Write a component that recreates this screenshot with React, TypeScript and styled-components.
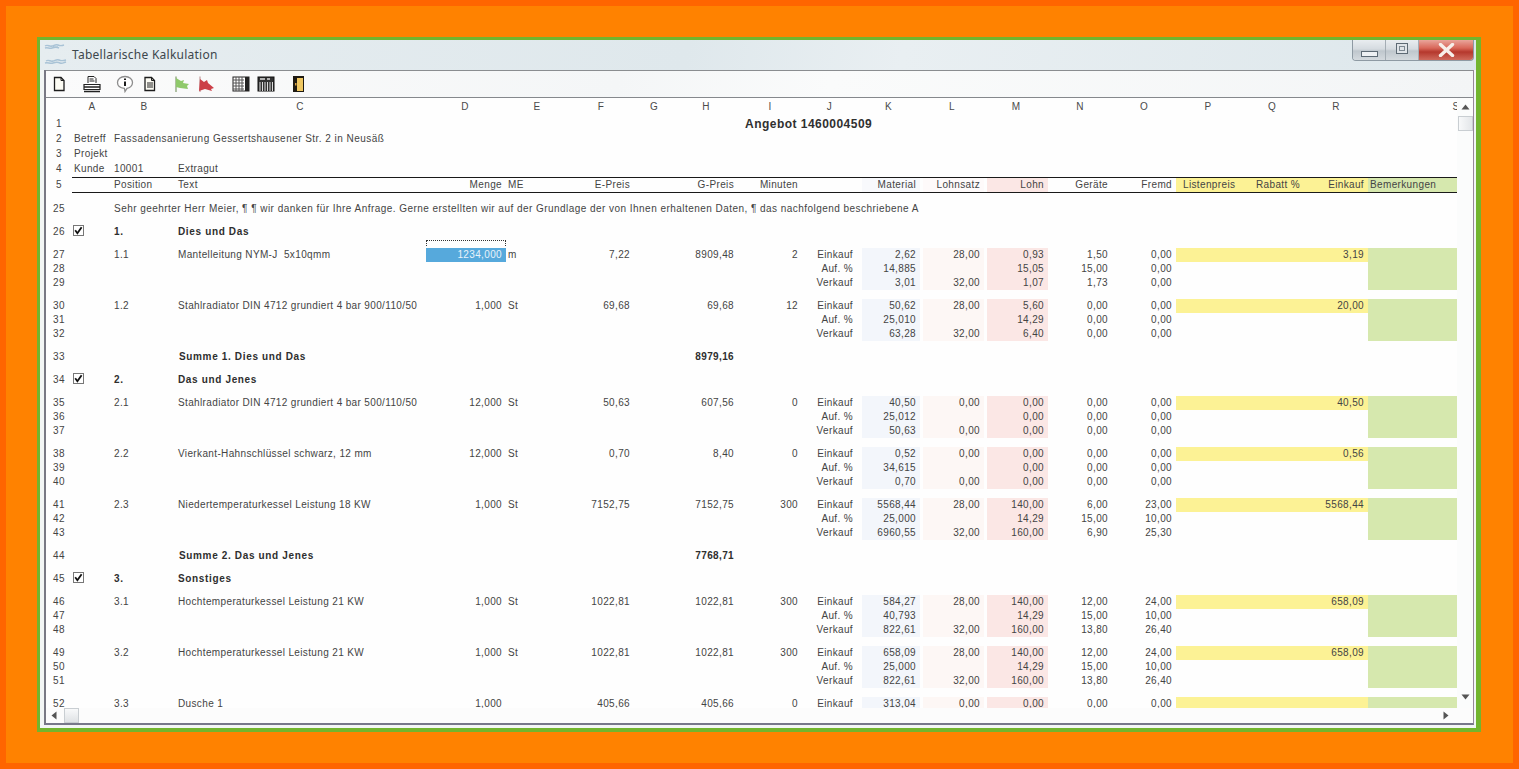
import React from "react";
import styled, { createGlobalStyle } from "styled-components";

const Global = createGlobalStyle`
  html, body { margin: 0; padding: 0; width: 1519px; height: 769px; overflow: hidden; }
  #root { width: 1519px; height: 769px; }
`;

const TEMPLATE = "26px 40px 64px 248px 82px 62px 66px 40px 64px 64px 55px 63px 64px 64px 64px 64px 64px 64px 64px 176px";

const C = { num: 1, A: 2, B: 3, TXT: 4, D: 5, E: 6, F: 7, G: 8, H: 9, I: 10, J: 11, K: 12, L: 13, M: 14, N: 15, O: 16, P: 17, Q: 18, R: 19, S: 20 };
const TINT = { blue: "#f3f6fb", faint: "#fdf7f5", pink: "#fbe7e5", yellow: "#fcf295", green: "#d6e8ae" };

const Page = styled.div`
  box-sizing: border-box; width: 1519px; height: 769px; padding: 6px; background: #ff6500; display: flex;
`;
const Frame = styled.div`
  flex: 1; min-width: 0; display: flex; background: #ff8200; padding: 31px 32px 31px 31px;
`;
const Window = styled.div`
  flex: 1; display: flex; flex-direction: column; min-width: 0;
  border-style: solid; border-color: #72b52e; border-width: 3px 5px 4px 3px;
  background: #eef3f4;
  font-family: "Liberation Sans", Arial, sans-serif;
`;
const TitleBar = styled.div`
  height: 30px; flex: none; display: flex; align-items: flex-start; padding-left: 4px;
  background: linear-gradient(100deg, #e6edf0 0%, #dfe8ec 45%, #e9eff2 60%, #dde7eb 100%);
`;
const Logo = styled.svg`
  width: 24px; height: 24px; flex: none; margin-top: 2px;
`;
const TitleText = styled.div`
  font-family: "Noto Sans", "Open Sans", sans-serif; font-size: 12px; line-height: 30px; color: #3d474c;
  margin-left: 4px; letter-spacing: .25px;
`;
const Controls = styled.div`
  margin-left: auto; margin-right: 2px; display: flex; height: 20px;
  border: 1px solid #8e9aa3; border-top: 0; border-radius: 0 0 4px 4px; overflow: hidden;
`;
const CtrlButton = styled.div<{ $w: number; $close?: boolean }>`
  width: ${p => p.$w}px; display: flex; align-items: center; justify-content: center;
  border-left: 1px solid #a4adb4;
  background: ${p => p.$close
    ? "linear-gradient(#e9a59b 0%, #d9685a 40%, #b5382d 60%, #cf6a5c 100%)"
    : "linear-gradient(#e9edf0 0%, #d5dbe0 45%, #bfc7cd 55%, #d4dade 100%)"};
  &:first-child { border-left: 0; }
`;
const MinGlyph = styled.div`
  width: 15px; height: 4px; margin-top: 8px; border: 1px solid #5d6a74; background: #eef1f3;
`;
const MaxGlyph = styled.div`
  width: 10px; height: 9px; margin-top: -4px; border: 1px solid #5d6a74; background: #dfe4e8;
  display: flex; align-items: center; justify-content: center;
  &::after { content: ""; width: 4px; height: 3px; border: 1px solid #7d8891; }
`;
const Client = styled.div`
  flex: 1; min-height: 0; min-width: 0; display: flex; padding: 0 2px 3px 4px; background: #f3f6f5;
`;
const Panel = styled.div`
  flex: 1; min-width: 0; display: flex; flex-direction: column;
  border-left: 2px solid #797984; border-right: 1px solid #97889a; border-bottom: 2px solid #77778a;
  background: #fff;
`;
const Toolbar = styled.div`
  height: 26px; flex: none; display: flex; align-items: center; padding-left: 6px;
  border-top: 1px solid #8a8d90; border-bottom: 1px solid #85888c;
  background: linear-gradient(100deg, #fbfbfb, #f4f6f7 40%, #fafbfb 55%, #f3f5f6);
`;
const ToolIcon = styled.svg<{ $gap: number }>`
  width: 18px; height: 18px; flex: none; margin-left: ${p => p.$gap}px;
`;
const Middle = styled.div`
  flex: 1; min-height: 0; min-width: 0; display: flex;
`;
const Sheet = styled.div`
  flex: 1; min-width: 0; overflow: hidden; background: #fefefe; font-size: 10px; color: #444; letter-spacing: .36px;
`;
const Row = styled.div<{ $h: number }>`
  display: grid; grid-template-columns: ${TEMPLATE}; height: ${p => p.$h}px; line-height: ${p => p.$h}px;
`;
const LetterRow = styled(Row)`
  color: #4a4a4a; font-size: 10px;
`;
const Letter = styled.div`
  text-align: center;
`;
const HeadRow = styled(Row)`
  margin-top: 1px; line-height: 15px;
`;
const HeadCell = styled.div<{ $right?: boolean; $pad?: number; $bg?: string; $ml?: number }>`
  box-sizing: border-box; border-top: 1px solid #1a1a1a; border-bottom: 1px solid #1a1a1a;
  text-align: ${p => (p.$right ? "right" : "left")};
  padding: ${p => (p.$right ? "0 4px 0 0" : `0 0 0 ${p.$pad ?? 2}px`)};
  background: ${p => (p.$bg ? `linear-gradient(90deg, #fefefe ${p.$ml ?? 0}px, ${p.$bg} ${p.$ml ?? 0}px)` : "transparent")};
  white-space: nowrap; overflow: hidden;
  line-height: 14px;
`;
const Group = styled.div`
  padding: 5px 0 4px;
`;
const Cell = styled.div<{ $c: number; $end?: number; $right?: boolean; $bg?: string; $bold?: boolean; $center?: boolean; $pad?: number; $ml?: number }>`
  grid-column: ${p => p.$c} / ${p => p.$end ?? p.$c + 1};
  box-sizing: border-box; white-space: nowrap;
  margin-left: ${p => p.$ml ?? 0}px;
  text-align: ${p => (p.$center ? "center" : p.$right ? "right" : "left")};
  padding: ${p => (p.$center ? "0" : p.$right ? "0 4px 0 0" : `0 0 0 ${p.$pad ?? 2}px`)};
  background: ${p => p.$bg ?? "transparent"};
  font-weight: ${p => (p.$bold ? 700 : 400)};
  color: ${p => (p.$bold ? "#2e2e2e" : "inherit")};
  letter-spacing: ${p => (p.$bold ? ".65px" : "inherit")};
`;
const WideCell = styled(Cell)`
  letter-spacing: .46px;
`;
const SumValue = styled(Cell)`
  letter-spacing: .36px;
`;
const Heading = styled(Cell)`
  font-size: 12px; font-weight: 700; color: #303030; letter-spacing: .47px; line-height: 16px;
`;
const Selected = styled(Cell)`
  position: relative; margin-left: 2px; background: #56a9dc; color: #e9f3fa;
  &::before {
    content: ""; position: absolute; left: 0; right: 0; top: -8px; height: 5px;
    border: 1px dotted #333; border-bottom: 0; pointer-events: none;
  }
`;
const Check = styled.svg`
  width: 11px; height: 11px; display: block; margin: 5px 0 0 -1px;
`;
const VScroll = styled.div`
  width: 16px; flex: none; display: flex; flex-direction: column; align-items: center; background: #fbfcfc;
`;
const Thumb = styled.div`
  width: 15px; height: 15px; flex: none; box-sizing: border-box; border: 1px solid #c9ced2;
  background: linear-gradient(90deg, #f8f9fa, #e3e6e9);
`;
const HThumb = styled(Thumb)`
  background: linear-gradient(#f8f9fa, #dfe2e5); margin-left: 7px;
`;
const HScroll = styled.div`
  height: 15px; flex: none; display: flex; align-items: center; background: #fcfcfc; padding-left: 5px;
`;
const VUp = styled.svg`
  width: 9px; height: 6px; flex: none; margin-top: 6px;
`;
const VDown = styled(VUp)`
  margin-top: auto; margin-bottom: 8px;
`;
const VGap = styled.div`
  height: 6px; flex: none;
`;
const Arrow = styled.svg`
  width: 6px; height: 9px; flex: none;
`;
const ArrowRight = styled(Arrow)`
  margin-left: auto; margin-right: 24px;
`;

const Doc: React.FC<{ dx: number; lines?: boolean }> = ({ dx, lines }) => (
  <g transform={`translate(${dx} 0)`}>
    <path d="M4 2.500h6.500l3 3v10H4z" fill="#fdfcf4" stroke="#1d1d1d" strokeWidth="1.300" />
    <path d="M10.500 2.500v3h3" fill="none" stroke="#1d1d1d" />
    {lines && <path d="M6 8h6M6 10h6M6 12h6" stroke="#222" />}
  </g>
);

const LETTERS = "ABCDEFGHIJKLMNOPQRS".split("");

type Item = {
  n: number; pos: string; text: string; qty: string; me: string; ep: string; gp: string; min: string;
  ek: string[]; auf?: string[]; vk?: string[]; list: string; sel?: boolean;
};

const Numbers: React.FC<{ vals: string[] }> = ({ vals }) => <>
  <Cell $c={C.K} $right $bg={TINT.blue} $ml={5}>{vals[0]}</Cell>
  <Cell $c={C.L} $right $bg={TINT.faint} $ml={3}>{vals[1]}</Cell>
  <Cell $c={C.M} $right $bg={TINT.pink} $ml={3}>{vals[2]}</Cell>
  <Cell $c={C.N} $right>{vals[3]}</Cell>
  <Cell $c={C.O} $right>{vals[4]}</Cell>
</>;

const ItemGroup: React.FC<{ it: Item }> = ({ it }) => (
  <Group>
    <Row $h={14}>
      <Cell $c={C.num} $center>{it.n}</Cell>
      <Cell $c={C.B}>{it.pos}</Cell>
      <Cell $c={C.TXT}>{it.text}</Cell>
      {it.sel ? <Selected $c={C.D} $right>{it.qty}</Selected> : <Cell $c={C.D} $right>{it.qty}</Cell>}
      <Cell $c={C.E}>{it.me}</Cell>
      <Cell $c={C.F} $right>{it.ep}</Cell>
      <Cell $c={C.H} $right>{it.gp}</Cell>
      <Cell $c={C.I} $right>{it.min}</Cell>
      <Cell $c={C.J} $right>Einkauf</Cell>
      <Numbers vals={it.ek} />
      <Cell $c={C.P} $bg={TINT.yellow} />
      <Cell $c={C.Q} $bg={TINT.yellow} />
      <Cell $c={C.R} $right $bg={TINT.yellow}>{it.list}</Cell>
      <Cell $c={C.S} $bg={TINT.green} />
    </Row>
    {it.auf && <Row $h={14}>
      <Cell $c={C.num} $center>{it.n + 1}</Cell>
      <Cell $c={C.J} $right>Auf. %</Cell>
      <Numbers vals={it.auf} />
      <Cell $c={C.S} $bg={TINT.green} />
    </Row>}
    {it.vk && <Row $h={14}>
      <Cell $c={C.num} $center>{it.n + 2}</Cell>
      <Cell $c={C.J} $right>Verkauf</Cell>
      <Numbers vals={it.vk} />
      <Cell $c={C.S} $bg={TINT.green} />
    </Row>}
  </Group>
);

const SectionRow: React.FC<{ n: number; pos: string; title: string }> = ({ n, pos, title }) => (
  <Row $h={23}>
    <Cell $c={C.num} $center>{n}</Cell>
    <Cell $c={C.A}>
      <Check viewBox="0 0 11 11">
        <rect x=".5" y=".5" width="10" height="10" fill="#fff" stroke="#777" />
        <path d="M2.200 5.200l2.200 3 4.200-6" fill="none" stroke="#111" strokeWidth="1.800" />
      </Check>
    </Cell>
    <Cell $c={C.B} $bold>{pos}</Cell>
    <Cell $c={C.TXT} $bold>{title}</Cell>
  </Row>
);

const SumRow: React.FC<{ n: number; title: string; sum: string }> = ({ n, title, sum }) => (
  <Row $h={23}>
    <Cell $c={C.num} $center>{n}</Cell>
    <Cell $c={C.TXT} $end={C.H} $bold $pad={3}>{title}</Cell>
    <SumValue $c={C.H} $right $bold>{sum}</SumValue>
  </Row>
);

const KESSEL = "Hochtemperaturkessel Leistung 21 KW";
const ITEMS: Record<string, Item> = {
  a: { n: 27, pos: "1.1", text: "Mantelleitung NYM-J\u00a0 5x10qmm", qty: "1234,000", me: "m", ep: "7,22", gp: "8909,48", min: "2", sel: true, list: "3,19",
    ek: ["2,62", "28,00", "0,93", "1,50", "0,00"], auf: ["14,885", "", "15,05", "15,00", "0,00"], vk: ["3,01", "32,00", "1,07", "1,73", "0,00"] },
  b: { n: 30, pos: "1.2", text: "Stahlradiator DIN 4712 grundiert 4 bar 900/110/50", qty: "1,000", me: "St", ep: "69,68", gp: "69,68", min: "12", list: "20,00",
    ek: ["50,62", "28,00", "5,60", "0,00", "0,00"], auf: ["25,010", "", "14,29", "0,00", "0,00"], vk: ["63,28", "32,00", "6,40", "0,00", "0,00"] },
  c: { n: 35, pos: "2.1", text: "Stahlradiator DIN 4712 grundiert 4 bar 500/110/50", qty: "12,000", me: "St", ep: "50,63", gp: "607,56", min: "0", list: "40,50",
    ek: ["40,50", "0,00", "0,00", "0,00", "0,00"], auf: ["25,012", "", "0,00", "0,00", "0,00"], vk: ["50,63", "0,00", "0,00", "0,00", "0,00"] },
  d: { n: 38, pos: "2.2", text: "Vierkant-Hahnschlüssel schwarz, 12 mm", qty: "12,000", me: "St", ep: "0,70", gp: "8,40", min: "0", list: "0,56",
    ek: ["0,52", "0,00", "0,00", "0,00", "0,00"], auf: ["34,615", "", "0,00", "0,00", "0,00"], vk: ["0,70", "0,00", "0,00", "0,00", "0,00"] },
  e: { n: 41, pos: "2.3", text: "Niedertemperaturkessel Leistung 18 KW", qty: "1,000", me: "St", ep: "7152,75", gp: "7152,75", min: "300", list: "5568,44",
    ek: ["5568,44", "28,00", "140,00", "6,00", "23,00"], auf: ["25,000", "", "14,29", "15,00", "10,00"], vk: ["6960,55", "32,00", "160,00", "6,90", "25,30"] },
  f: { n: 46, pos: "3.1", text: KESSEL, qty: "1,000", me: "St", ep: "1022,81", gp: "1022,81", min: "300", list: "658,09",
    ek: ["584,27", "28,00", "140,00", "12,00", "24,00"], auf: ["40,793", "", "14,29", "15,00", "10,00"], vk: ["822,61", "32,00", "160,00", "13,80", "26,40"] },
  g: { n: 49, pos: "3.2", text: KESSEL, qty: "1,000", me: "St", ep: "1022,81", gp: "1022,81", min: "300", list: "658,09",
    ek: ["658,09", "28,00", "140,00", "12,00", "24,00"], auf: ["25,000", "", "14,29", "15,00", "10,00"], vk: ["822,61", "32,00", "160,00", "13,80", "26,40"] },
  h: { n: 52, pos: "3.3", text: "Dusche 1", qty: "1,000", me: "", ep: "405,66", gp: "405,66", min: "0", list: "",
    ek: ["313,04", "0,00", "0,00", "0,00", "0,00"] },
};

const HEAD: { t: string; right?: boolean; pad?: number; bg?: string; ml?: number }[] = [
  { t: "" }, { t: "Position" }, { t: "Text" }, { t: "Menge", right: true }, { t: "ME" },
  { t: "E-Preis", right: true }, { t: "" }, { t: "G-Preis", right: true }, { t: "Minuten", right: true }, { t: "" },
  { t: "Material", right: true, bg: "#f8f9fc", ml: 5 }, { t: "Lohnsatz", right: true, bg: "#fefafa", ml: 3 }, { t: "Lohn", right: true, bg: TINT.pink, ml: 3 },
  { t: "Geräte", right: true }, { t: "Fremd", right: true },
  { t: "Listenpreis", pad: 7, bg: TINT.yellow }, { t: "Rabatt %", right: true, bg: TINT.yellow }, { t: "Einkauf", right: true, bg: TINT.yellow },
  { t: "Bemerkungen", bg: TINT.green },
];

export default function App() {
  return (
    <Page>
      <Global />
      <Frame>
        <Window>
          <TitleBar>
            <Logo viewBox="0 0 24 24">
              <path d="M1 4c3-2 4 1 7 0s4-2 6-1 3 1 6 0M1 6c3-1 4 1 7 0s5-1 7 0M9 5h5" fill="none" stroke="#a9c3d6" strokeWidth="1.400" />
              <path d="M2 19c3-2 4 1 7 0s4-2 6-1 3 1 7 0M1 21c3-1 5 1 8 0s5-1 7 0 3 0 6-1" fill="none" stroke="#a9c3d6" strokeWidth="1.400" />
            </Logo>
            <TitleText>Tabellarische Kalkulation</TitleText>
            <Controls>
              <CtrlButton $w={32}><MinGlyph /></CtrlButton>
              <CtrlButton $w={32}><MaxGlyph /></CtrlButton>
              <CtrlButton $w={54} $close>
                <svg width="17" height="14" viewBox="0 0 17 14">
                  <path d="M2.500 1.500l12 11M14.500 1.500l-12 11" stroke="#f7efe9" strokeWidth="3.400" strokeLinecap="round" />
                </svg>
              </CtrlButton>
            </Controls>
          </TitleBar>
          <Client>
            <Panel>
              <Toolbar>
                <ToolIcon $gap={0} viewBox="0 0 18 18"><Doc dx={-1.5} /></ToolIcon>
                <ToolIcon $gap={13} viewBox="0 0 18 18">
                  <path d="M5 8V1.500h6l2 2V8" fill="#fff" stroke="#222" />
                  <path d="M6.500 4h4M6.500 6h5" stroke="#222" />
                  <path d="M1 9.500h16v5H1z" fill="#fff" stroke="#222" strokeWidth="1.200" />
                  <path d="M1 12h16M1 16.500h16" stroke="#222" strokeWidth="1.300" />
                </ToolIcon>
                <ToolIcon $gap={15} viewBox="0 0 18 18">
                  <path d="M9 1.500c4.400 0 7.500 2.600 7.500 6s-2.800 5.600-5.500 5.800L9 16.500l-.6-3.200C4.500 13 1.500 11 1.500 7.500s3.100-6 7.500-6z" fill="#fff" stroke="#8d8d8d" strokeWidth="1.300" />
                  <path d="M9 3.500v1.600M9 6.500v4.500" stroke="#1c1c1c" strokeWidth="2" />
                </ToolIcon>
                <ToolIcon $gap={10} viewBox="0 0 18 18"><Doc dx={-3} lines /></ToolIcon>
                <ToolIcon $gap={11} viewBox="0 0 18 18">
                  <path d="M3 1.500V17" stroke="#7f9a6a" strokeWidth="1.200" />
                  <path d="M3 3l5 3 3-1-1 3 6 1-2 2 1 3-8-1-4-1z" fill="#8fc96a" />
                </ToolIcon>
                <ToolIcon $gap={6} viewBox="0 0 18 18">
                  <path d="M3 1.500V17" stroke="#c09a9a" strokeWidth="1.200" />
                  <path d="M3 4l4 3 3-2 1 3 6 5-3 1 1 2-7-2-6 2z" fill="#cc3f48" />
                </ToolIcon>
                <ToolIcon $gap={17} viewBox="0 0 18 18">
                  <rect x="1" y="2" width="16" height="14" fill="#fff" stroke="#222" />
                  <path d="M1 5h11M1 8h11M1 11h11M1 14h11M4 2v14M7 2v14M10 2v14" stroke="#555" />
                  <rect x="13" y="2" width="4" height="14" fill="#222" />
                </ToolIcon>
                <ToolIcon $gap={7} viewBox="0 0 18 18">
                  <rect x="1" y="2" width="16" height="14" fill="#333" stroke="#111" />
                  <path d="M3 7v9M5.500 7v9M8 7v9M10.500 7v9M13 7v9M15.500 7v9" stroke="#ddd" />
                  <path d="M3 4h5M10 4h3" stroke="#ddd" strokeWidth="1.500" />
                </ToolIcon>
                <ToolIcon $gap={15} viewBox="0 0 18 18">
                  <rect x="3" y="1" width="11" height="16" fill="#1e1a12" />
                  <rect x="7" y="3" width="6" height="13" fill="#f0c862" />
                  <rect x="5" y="8" width="1.500" height="2.500" fill="#d9a441" />
                </ToolIcon>
              </Toolbar>
              <Middle>
                <Sheet>
                  <LetterRow $h={17.5}>
                    <div />
                    {LETTERS.map(l => <Letter key={l}>{l}</Letter>)}
                  </LetterRow>
                  <Row $h={15}>
                    <Cell $c={C.num} $center>1</Cell>
                    <Heading $c={C.I} $end={C.L} $pad={7}>Angebot 1460004509</Heading>
                  </Row>
                  <Row $h={15}>
                    <Cell $c={C.num} $center>2</Cell>
                    <Cell $c={C.A}>Betreff</Cell>
                    <WideCell $c={C.B} $end={C.D}>Fassadensanierung Gessertshausener Str. 2 in Neusäß</WideCell>
                  </Row>
                  <Row $h={15}>
                    <Cell $c={C.num} $center>3</Cell>
                    <Cell $c={C.A}>Projekt</Cell>
                  </Row>
                  <Row $h={15}>
                    <Cell $c={C.num} $center>4</Cell>
                    <Cell $c={C.A}>Kunde</Cell>
                    <Cell $c={C.B}>10001</Cell>
                    <Cell $c={C.TXT}>Extragut</Cell>
                  </Row>
                  <HeadRow $h={16}>
                    <Cell $c={C.num} $center>5</Cell>
                    {HEAD.map((h, i) => <HeadCell key={i} $right={h.right} $pad={h.pad} $bg={h.bg} $ml={h.ml}>{h.t}</HeadCell>)}
                  </HeadRow>
                  <Row $h={4} />
                  <Row $h={23}>
                    <Cell $c={C.num} $center>25</Cell>
                    <WideCell $c={C.B} $end={-1}>Sehr geehrter Herr Meier, ¶ ¶ wir danken für Ihre Anfrage. Gerne erstellten wir auf der Grundlage der von Ihnen erhaltenen Daten, ¶ das nachfolgend beschriebene A</WideCell>
                  </Row>
                  <SectionRow n={26} pos="1." title="Dies und Das" />
                  <ItemGroup it={ITEMS.a} />
                  <ItemGroup it={ITEMS.b} />
                  <SumRow n={33} title="Summe 1. Dies und Das" sum="8979,16" />
                  <SectionRow n={34} pos="2." title="Das und Jenes" />
                  <ItemGroup it={ITEMS.c} />
                  <ItemGroup it={ITEMS.d} />
                  <ItemGroup it={ITEMS.e} />
                  <SumRow n={44} title="Summe 2. Das und Jenes" sum="7768,71" />
                  <SectionRow n={45} pos="3." title="Sonstiges" />
                  <ItemGroup it={ITEMS.f} />
                  <ItemGroup it={ITEMS.g} />
                  <ItemGroup it={ITEMS.h} />
                </Sheet>
                <VScroll>
                  <VUp viewBox="0 0 9 6"><path d="M4.500 0.500L8.500 5.500H0.500z" fill="#555" /></VUp>
                  <VGap />
                  <Thumb />
                  <VDown viewBox="0 0 9 6"><path d="M4.500 5.500L8.500 0.500H0.500z" fill="#555" /></VDown>
                </VScroll>
              </Middle>
              <HScroll>
                <Arrow viewBox="0 0 6 9"><path d="M0.500 4.500L5.500 0.500V8.500z" fill="#555" /></Arrow>
                <HThumb />
                <ArrowRight viewBox="0 0 6 9"><path d="M5.500 4.500L0.500 0.500V8.500z" fill="#555" /></ArrowRight>
              </HScroll>
            </Panel>
          </Client>
        </Window>
      </Frame>
    </Page>
  );
}
